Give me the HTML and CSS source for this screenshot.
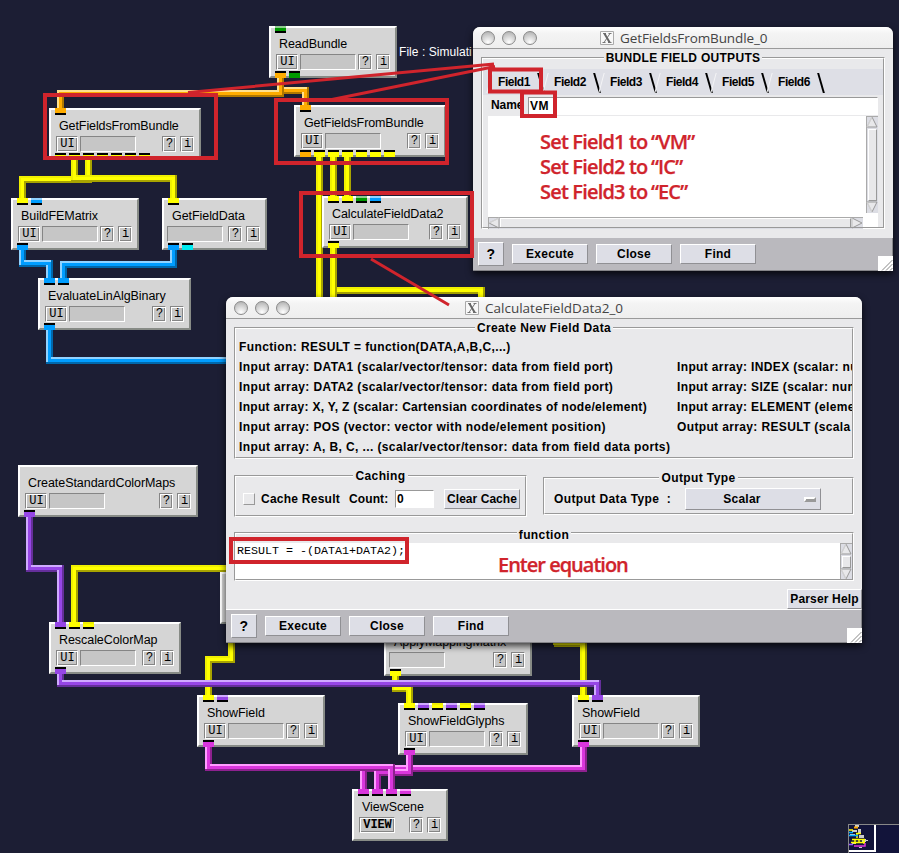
FILE: index.html
```
<!DOCTYPE html>
<html lang="en">
<head>
<meta charset="utf-8">
<title>Network editor</title>
<link rel="stylesheet" href="styles.css">
</head>
<body>
<main class="desktop">
<svg class="layer" width="899" height="853" viewBox="0 0 899 853">
<defs>
<path id="w1" d="M280.5 76V93.5H60.5V112"/><path id="w2" d="M280.5 76V90.5H305.5V109"/>
<path id="w3" d="M88.5 156V179.5H22.5V202"/><path id="w4" d="M74.5 156V178.5H173.5V202"/>
<path id="w5" d="M22.5 246V263.5H49.5V282"/><path id="w6" d="M173.5 246V264.5H63.5V282"/>
<path id="w7" d="M49.5 326V360.5H240"/><path id="w8" d="M319.5 155V300"/>
<path id="w9" d="M333.5 155V199"/><path id="w10" d="M347.5 155V199"/>
<path id="w11" d="M333.5 290.5H481.5V300"/><path id="w12" d="M333.5 244V300"/>
<path id="w13" d="M29.5 512V568.5H60.5V626"/><path id="w14" d="M240 568.5H74.5V626"/>
<path id="w15" d="M231.5 640V659.5H208.5V699"/><path id="w16" d="M395.5 672V688.5H409.5V707"/>
<path id="w17" d="M554 643.5H583.5V699"/><path id="w18" d="M60.5 670V683.5H597.5V699"/>
<path id="w19" d="M583.5 743V768.5H363.5V793"/><path id="w20" d="M409.5 751V772.5H377.5V793"/>
<path id="w21" d="M208.5 743V767.5H391.5V793"/>
</defs>
<g class="wire orange"><use class="dk" href="#w2"/><use class="lt" href="#w2" x="-1" y="-1"/><use class="md" href="#w2"/></g>
<g class="wire orange"><use class="dk" href="#w1"/><use class="lt" href="#w1" x="-1" y="-1"/><use class="md" href="#w1"/></g>
<g class="wire yellow"><use class="dk" href="#w3"/><use class="lt" href="#w3" x="-1" y="-1"/><use class="md" href="#w3"/></g>
<g class="wire yellow"><use class="dk" href="#w4"/><use class="lt" href="#w4" x="-1" y="-1"/><use class="md" href="#w4"/></g>
<g class="wire blue"><use class="dk" href="#w5"/><use class="lt" href="#w5" x="-1" y="-1"/><use class="md" href="#w5"/></g>
<g class="wire blue"><use class="dk" href="#w6"/><use class="lt" href="#w6" x="-1" y="-1"/><use class="md" href="#w6"/></g>
<g class="wire blue"><use class="dk" href="#w7"/><use class="lt" href="#w7" x="-1" y="-1"/><use class="md" href="#w7"/></g>
<g class="wire yellow"><use class="dk" href="#w8"/><use class="lt" href="#w8" x="-1" y="-1"/><use class="md" href="#w8"/></g>
<g class="wire yellow"><use class="dk" href="#w9"/><use class="lt" href="#w9" x="-1" y="-1"/><use class="md" href="#w9"/></g>
<g class="wire yellow"><use class="dk" href="#w10"/><use class="lt" href="#w10" x="-1" y="-1"/><use class="md" href="#w10"/></g>
<g class="wire yellow"><use class="dk" href="#w11"/><use class="lt" href="#w11" x="-1" y="-1"/><use class="md" href="#w11"/></g>
<g class="wire yellow"><use class="dk" href="#w12"/><use class="lt" href="#w12" x="-1" y="-1"/><use class="md" href="#w12"/></g>
<g class="wire purple"><use class="dk" href="#w13"/><use class="lt" href="#w13" x="-1" y="-1"/><use class="md" href="#w13"/></g>
<g class="wire yellow"><use class="dk" href="#w14"/><use class="lt" href="#w14" x="-1" y="-1"/><use class="md" href="#w14"/></g>
<g class="wire yellow"><use class="dk" href="#w15"/><use class="lt" href="#w15" x="-1" y="-1"/><use class="md" href="#w15"/></g>
<g class="wire yellow"><use class="dk" href="#w16"/><use class="lt" href="#w16" x="-1" y="-1"/><use class="md" href="#w16"/></g>
<g class="wire yellow"><use class="dk" href="#w17"/><use class="lt" href="#w17" x="-1" y="-1"/><use class="md" href="#w17"/></g>
<g class="wire purple"><use class="dk" href="#w18"/><use class="lt" href="#w18" x="-1" y="-1"/><use class="md" href="#w18"/></g>
<g class="wire magenta"><use class="dk" href="#w19"/><use class="lt" href="#w19" x="-1" y="-1"/><use class="md" href="#w19"/></g>
<g class="wire magenta"><use class="dk" href="#w20"/><use class="lt" href="#w20" x="-1" y="-1"/><use class="md" href="#w20"/></g>
<g class="wire magenta"><use class="dk" href="#w21"/><use class="lt" href="#w21" x="-1" y="-1"/><use class="md" href="#w21"/></g>
</svg>

<div class="node n-read"><div class="ports in"><i class="green open"></i></div><div class="name">ReadBundle</div><div class="tools"><b>UI</b><span></span><b class="q">?</b><b>i</b></div><div class="ports out"><i class="orange"></i><i class="green"></i></div></div>
<div class="node n-gfb1"><div class="ports in"><i class="orange"></i></div><div class="name">GetFieldsFromBundle</div><div class="tools"><b>UI</b><span></span><b class="q">?</b><b>i</b></div><div class="ports out"><i class="yellow"></i><i class="yellow"></i><i class="yellow"></i><i class="yellow"></i><i class="yellow"></i><i class="yellow"></i><i class="yellow"></i></div></div>
<div class="node n-gfb2"><div class="ports in"><i class="orange"></i></div><div class="name">GetFieldsFromBundle</div><div class="tools"><b>UI</b><span></span><b class="q">?</b><b>i</b></div><div class="ports out"><i class="orange"></i><i class="yellow"></i><i class="yellow"></i><i class="yellow"></i><i class="yellow"></i><i class="yellow"></i><i class="yellow"></i></div></div>
<div class="node n-fem"><div class="ports in"><i class="yellow"></i><i class="blue open"></i></div><div class="name">BuildFEMatrix</div><div class="tools"><b>UI</b><span></span><b class="q">?</b><b>i</b></div><div class="ports out"><i class="blue"></i></div></div>
<div class="node n-gfd"><div class="ports in"><i class="yellow"></i></div><div class="name">GetFieldData</div><div class="tools noui"><span></span><b class="q">?</b><b>i</b></div><div class="ports out"><i class="blue"></i><i class="cyan"></i></div></div>
<div class="node n-calc"><div class="ports in"><i class="yellow"></i><i class="yellow"></i><i class="green open"></i><i class="blue open"></i></div><div class="name">CalculateFieldData2</div><div class="tools"><b>UI</b><span></span><b class="q">?</b><b>i</b></div><div class="ports out"><i class="yellow"></i></div></div>
<div class="node n-eval"><div class="ports in"><i class="blue"></i><i class="blue"></i></div><div class="name">EvaluateLinAlgBinary</div><div class="tools"><b>UI</b><span></span><b class="q">?</b><b>i</b></div><div class="ports out"><i class="blue"></i></div></div>
<div class="node n-std"><div class="name">CreateStandardColorMaps</div><div class="tools"><b>UI</b><span></span><b class="q">?</b><b>i</b></div><div class="ports out"><i class="purple"></i></div></div>
<div class="node n-hid"></div>
<div class="node n-resc"><div class="ports in"><i class="purple"></i><i class="yellow"></i><i class="yellow open"></i></div><div class="name">RescaleColorMap</div><div class="tools"><b>UI</b><span></span><b class="q">?</b><b>i</b></div><div class="ports out"><i class="purple"></i></div></div>
<div class="node n-sf1"><div class="ports in"><i class="yellow"></i><i class="purple open"></i></div><div class="name">ShowField</div><div class="tools"><b>UI</b><span></span><b class="q">?</b><b>i</b></div><div class="ports out"><i class="magenta"></i></div></div>
<div class="node n-apply"><div class="name">ApplyMappingMatrix</div><div class="tools noui"><span></span><b class="q">?</b><b>i</b></div><div class="ports out"><i class="yellow"></i></div></div>
<div class="node n-glyph"><div class="ports in"><i class="yellow"></i><i class="purple open"></i><i class="yellow open"></i><i class="purple open"></i><i class="yellow open"></i><i class="purple open"></i></div><div class="name">ShowFieldGlyphs</div><div class="tools"><b>UI</b><span></span><b class="q">?</b><b>i</b></div><div class="ports out"><i class="magenta"></i></div></div>
<div class="node n-sf2"><div class="ports in"><i class="yellow"></i><i class="purple"></i></div><div class="name">ShowField</div><div class="tools"><b>UI</b><span></span><b class="q">?</b><b>i</b></div><div class="ports out"><i class="magenta"></i></div></div>
<div class="node n-view"><div class="ports in"><i class="magenta"></i><i class="magenta"></i><i class="magenta"></i><i class="magenta open"></i></div><div class="name">ViewScene</div><div class="tools"><b class="wide">VIEW</b><b class="q">?</b><b>i</b></div></div>
<div class="filetext">File : Simulati</div>

<section class="window bundle">
<header class="titlebar"><i class="light"></i><i class="light"></i><i class="light"></i><svg class="xicon" width="14" height="14" viewBox="0 0 14 14"><path class="frame" d="M.5 13.5V.5H13.5V13.5Z"/><path d="M3 2.5H6M8.5 2.5H11.5M2.5 11.5H5.5M8 11.5H11.5M10 2.5L4 11.5"/><path class="thick" d="M4.400 2.500L9.700 11.500"/></svg><h1>GetFieldsFromBundle_0</h1></header>
<div class="body">
<div class="group"><div class="legend">BUNDLE FIELD OUTPUTS</div>
<div class="tabs"><span>Field1</span><span>Field2</span><span>Field3</span><span>Field4</span><span>Field5</span><span>Field6</span></div>
<div class="namerow"><label>Name</label><div class="entry">VM</div></div>
<div class="textarea"><div class="area-main"><div class="note">Set Field1 to <em>“VM”</em><br>Set Field2 to <em>“IC”</em><br>Set Field3 to <em>“EC”</em></div>
<div class="vscroll"><svg width="12" height="12"><path class="g" d="M1 11L6 1L11 11Z"/><path class="w" d="M1 11L6 1"/></svg><i></i><svg width="12" height="12"><path class="g" d="M1 1H11L6 11Z"/><path class="w" d="M1 1L6 11"/></svg></div></div>
<div class="hscroll"><svg width="12" height="12"><path class="g" d="M11 1L1 6L11 11Z"/><path class="w" d="M11 1L1 6"/></svg><i></i><svg width="12" height="12"><path class="g" d="M1 1L11 6L1 11Z"/><path class="w" d="M1 11V1"/></svg></div></div>
</div></div>
<footer class="bar"><button class="help">?</button><button>Execute</button><button>Close</button><button>Find</button><svg class="grip" width="15" height="15"><path d="M4 14.500L14.500 4M8 14.500L14.500 8M12 14.500L14.500 12"/></svg></footer>
</section>

<section class="window calc">
<header class="titlebar"><i class="light"></i><i class="light"></i><i class="light"></i><svg class="xicon" width="14" height="14" viewBox="0 0 14 14"><path class="frame" d="M.5 13.5V.5H13.5V13.5Z"/><path d="M3 2.5H6M8.5 2.5H11.5M2.5 11.5H5.5M8 11.5H11.5M10 2.5L4 11.5"/><path class="thick" d="M4.400 2.500L9.700 11.500"/></svg><h1>CalculateFieldData2_0</h1></header>
<div class="body">
<div class="group create"><div class="legend">Create New Field Data</div>
<div class="cols"><div class="colA"><p>Function: RESULT = function(DATA,A,B,C,...)</p><p>Input array: DATA1 (scalar/vector/tensor: data from field port)</p><p>Input array: DATA2 (scalar/vector/tensor: data from field port)</p><p class="tight">Input array: X, Y, Z (scalar: Cartensian coordinates of node/element)</p><p>Input array: POS (vector: vector with node/element position)</p><p>Input array: A, B, C, ... (scalar/vector/tensor: data from field data ports)</p></div>
<div class="colB"><p>Input array: INDEX (scalar: nu</p><p>Input array: SIZE (scalar: num</p><p>Input array: ELEMENT (eleme</p><p>Output array: RESULT (scala</p></div></div></div>
<div class="mid">
<div class="group caching"><div class="legend">Caching</div><div class="line"><i class="check"></i><span class="cr">Cache Result</span><span class="ct">Count:</span><div class="entry count">0</div><button class="clear">Clear Cache</button></div></div>
<div class="group output"><div class="legend">Output Type</div><div class="line"><span class="odt">Output Data Type&nbsp; :</span><button class="drop"><span>Scalar</span><i></i></button></div></div>
</div>
<div class="group func"><div class="legend">function</div><div class="code"><div class="src">RESULT = -(DATA1+DATA2);</div><div class="note">Enter equation</div>
<div class="vscroll"><svg width="12" height="12"><path class="g" d="M1 11L6 1L11 11Z"/><path class="w" d="M1 11L6 1"/></svg><i></i><svg width="12" height="12"><path class="g" d="M1 1H11L6 11Z"/><path class="w" d="M1 1L6 11"/></svg></div></div></div>
<button class="parser">Parser Help</button>
</div>
<footer class="bar"><button class="help">?</button><button>Execute</button><button>Close</button><button>Find</button><svg class="grip" width="15" height="15"><path d="M4 14.500L14.500 4M8 14.500L14.500 8M12 14.500L14.500 12"/></svg></footer>
</section>

<svg class="layer marks" width="899" height="853" viewBox="0 0 899 853">
<path class="m4" d="M45 95H216V158H45ZM276 100H447V163H276ZM301 193H472V256H301ZM490 69.500H541V91.500H490ZM522 92.500H555V116H522ZM231 539H407V562H231Z"/>
<path class="m3" d="M188 92.500L494 64M332 99.500L495 66.500M371 259L449 305"/>
</svg>

<div class="minimap"><svg width="28" height="27"><g fill="#ccc"><path d="M6 0h4v2h-4zM3 5h5v2h-5zM9 4h3v4h-3zM1 9h5v2h-5zM10 10h5v3h-5zM13 14h4v3h-4zM3 18h4v1h-4zM15 15h4v1h-4zM10 22h3v1h-3z"/></g><path stroke="#fa0" stroke-width="2" d="M5 2.500H9"/><path stroke="#ff0" stroke-width="1.500" fill="none" d="M0 5H4M7 8.500H12M8 9V13M3 14.500H16M2 17.500H16M6 14V19M15 14V19M10 14V17"/><path stroke="#0af" stroke-width="1.500" d="M0 7.500H4M0 10.500H9"/><path stroke="#95f" stroke-width="1.500" d="M0 19.500H4"/><path stroke="#d3d" stroke-width="1.500" fill="none" d="M5 21H16V18"/></svg></div>
</main>
</body>
</html>
```
FILE: styles.css
```
* { box-sizing: border-box; }
body { margin: 0; background: #1c1e34; font-family: "Liberation Sans", Arial, sans-serif; color: #000; }
.desktop { position: relative; width: 899px; height: 853px; overflow: hidden; background: #1c1e34; }
.layer { position: absolute; left: 0; top: 0; display: block; }

/* wires */
.wire { fill: none; stroke-linejoin: miter; }
.wire .dk { stroke: var(--d); stroke-width: 7; }
.wire .lt { stroke: var(--l); stroke-width: 5; }
.wire .md { stroke: var(--c); stroke-width: 3; }
.orange { --c: #ffac00; --l: #ffe08c; --d: #b07800; }
.yellow { --c: #ffff00; --l: #f0f000; --d: #a8a400; }
.blue { --c: #009dff; --l: #90d2ff; --d: #0068ac; }
.purple { --c: #9646e6; --l: #cfaaff; --d: #652f9b; }
.magenta { --c: #d936dc; --l: #ff9cff; --d: #8e218f; }
.green { --c: #009a00; --l: #8fcb8f; --d: #006600; }
.cyan { --c: #00eaf0; --l: #90ffff; --d: #009aa0; }

/* modules */
.node { position: absolute; height: 52px; background: #d5d5d5; border: 2px solid; border-color: #fff #878b86 #878b86 #fff; width: 128px; }
.node .name { height: 26px; padding: 8px 0 0 8px; font-size: 12.5px; line-height: 16px; letter-spacing: -.06px; white-space: nowrap; }
.tools { display: flex; height: 16px; padding: 0 5px; }
.tools.noui { padding-left: 3px; }
.tools b { width: 14px; height: 16px; padding-left: 1px; background: #c6c6c6; border: 1px solid; border-color: #858585 #fff #fff #858585; box-shadow: inset 1px 1px #fff, inset -1px -1px #858585; font: 12px/15px "Liberation Mono", monospace; text-align: center; }
.tools b:first-child { width: 22px; margin-right: 2px; }
.tools b.wide:first-child { width: 36px; font-weight: bold; letter-spacing: -.1px; }
.tools span { width: 56px; background: #c6c6c6; border: 1px solid; border-color: #858585 #fff #fff #858585; }
.tools .q { margin-left: auto; margin-right: 4px; }
.n-gfb1 .name, .n-gfb2 .name { letter-spacing: -.1px; }
.ports { position: absolute; left: 4px; display: flex; gap: 3px; }
.ports i { width: 11px; height: 7px; background: var(--c); }
.ports.in { top: -2px; }
.ports.in i { border-bottom: 2px solid #000; }
.ports.in i.open { border-top: 2px solid var(--l); }
.ports.out { bottom: -2px; }
.ports.out i { border-top: 2px solid #000; }
.n-read { left: 269px; top: 26px; }
.n-gfb1 { left: 49px; top: 108px; width: 152px; }
.n-gfb2 { left: 294px; top: 105px; width: 152px; }
.n-fem { left: 11px; top: 198px; }
.n-gfd { left: 162px; top: 198px; width: 105px; }
.n-calc { left: 322px; top: 196px; width: 146px; }
.n-eval { left: 38px; top: 278px; width: 153px; }
.n-std { left: 18px; top: 465px; width: 180px; }
.n-hid { left: 220px; top: 572px; }
.n-resc { left: 49px; top: 622px; width: 132px; }
.n-sf1 { left: 197px; top: 695px; }
.n-apply { left: 384px; top: 624px; width: 148px; }
.n-glyph { left: 398px; top: 703px; width: 130px; }
.n-sf2 { left: 572px; top: 695px; }
.n-view { left: 352px; top: 789px; width: 96px; }
.filetext { position: absolute; left: 399px; top: 44px; color: #fff; font-size: 12px; line-height: 16px; letter-spacing: .05px; white-space: nowrap; }

/* windows */
.window { position: absolute; display: flex; flex-direction: column; background: #e9e9eb; border-radius: 7px 7px 0 0; box-shadow: 0 3px 7px rgba(0,0,0,.75); font-size: 12px; font-weight: bold; letter-spacing: .39px; overflow: hidden; }
.window.bundle { left: 473px; top: 27px; width: 420px; height: 244px; }
.window.calc { left: 226px; top: 297px; width: 636px; height: 346px; }
.titlebar { flex: none; display: flex; align-items: center; height: 22px; padding-left: 8px; background: linear-gradient(#fff, #f4f4f4 30%, #eee); border-bottom: 1px solid #9a9a9a; }
.light { width: 14px; height: 14px; margin-right: 7px; border-radius: 50%; border: 1px solid #8a8a8a; background: radial-gradient(circle at 50% 85%, #fff, #ccc 60%, #aaa); }
.xicon { fill: none; stroke: #777; stroke-width: 1; }
.xicon .frame { stroke: #aaa; fill: #f8f8f8; }
.xicon .thick { stroke-width: 2; stroke: #666; }
.bundle .xicon { margin-left: 56px; }
.calc .xicon { margin-left: 168px; }
.titlebar h1 { margin: 0 0 0 6px; font: 13.5px/20px "Open Sans", "Noto Sans", sans-serif; color: #444; letter-spacing: 0; }
.bundle h1 { letter-spacing: -.1px; }
.body { flex: 1; display: flex; flex-direction: column; padding: 8px 8px 0; }
.group { position: relative; border: 1px solid; border-color: #999 #fff #fff #999; }
.group::before { content: ""; position: absolute; inset: 0; border: 1px solid; border-color: #fff #999 #999 #fff; pointer-events: none; }
.legend { position: relative; width: max-content; height: 16px; margin: -8px auto 0; padding: 0 2px; line-height: 17px; background: #e9e9eb; }
.bundle .group { height: 172px; }
.bundle .legend { letter-spacing: .3px; }
.tabs { display: flex; margin: 3px 1px 0; padding-left: 3px; height: 26px; background: #dedfe6; }
.tabs span { display: flex; width: 56px; padding-left: 3px; line-height: 26px; letter-spacing: -.45px; }
.tabs span::before, .tabs span::after { content: ""; width: 1px; height: 20px; margin-top: 4px; }
.tabs span::before { margin-right: 8px; background: #f4f4f6; transform: skewX(-15deg); }
.tabs span::after { width: 1.5px; margin-left: auto; margin-right: 1px; background: #000; transform: skewX(16deg); }
.namerow { display: flex; margin: 2px 6px 0; height: 18px; }
.namerow label { width: 40px; padding-left: 3px; line-height: 16px; letter-spacing: -.1px; }
.entry { flex: 1; padding-left: 1px; line-height: 16px; background: #fff; border: 1px solid; border-color: #999 #fff #fff #999; }
.textarea { margin: 1px 6px 0; height: 113px; background: #fff; display: flex; flex-direction: column; }
.area-main { display: flex; height: 97px; }
.note { flex: 1; font: 600 20px/25.3px "Open Sans", sans-serif; letter-spacing: -1px; color: #d0242c; -webkit-text-stroke: .25px #d0242c; }
.note em { font-style: normal; margin-left: -1px; }
.bundle .note { padding: 13px 0 0 52px; line-height: 25px; letter-spacing: -.82px; white-space: nowrap; }
.vscroll { width: 12px; display: flex; flex-direction: column; background: #dcdde4; box-shadow: inset 1px 1px #aaa; }
.vscroll i { flex: 1; margin: 1px 1px 0 2px; background: #e8e8ea; border: 1px solid; border-color: #fff #999 #999 #fff; }
.hscroll { display: flex; width: 375px; height: 12px; margin-top: 4px; background: #dcdde4; box-shadow: inset 1px 1px #aaa; }
.hscroll i { flex: 1; margin: 1px 0; background: #e8e8ea; border: 1px solid; border-color: #fff #999 #999 #fff; }
.vscroll svg, .hscroll svg { flex: none; display: block; fill: #e8e8ea; }
.g { stroke: #999; }
.w { stroke: #fff; stroke-opacity: .6; fill: none; }
.bar { position: relative; flex: none; display: flex; align-items: center; gap: 8px; padding-left: 5px; background: #bab9be; border: solid #858589; border-width: 0 1px 1px 0; }
.bundle .bar { height: 33px; }
.calc .bar { height: 34px; border-top: 1px solid #fff; }
button { margin: 0; padding: 0; width: 76px; height: 20px; background: #dddee6; border: 1px solid; border-color: #fff #909094 #909094 #fff; font: bold 12px/16px "Liberation Sans", sans-serif; letter-spacing: .25px; color: #000; border-radius: 0; text-align: center; white-space: nowrap; }
.bar .help { width: 26px; height: 24px; font-size: 14px; }
.grip { position: absolute; right: -1px; bottom: -1px; background: #fff; stroke: #888; fill: none; }

.create { height: 132px; }
.cols { display: flex; margin: 1px 1px 0 4px; overflow: hidden; }
.cols p { margin: 0; height: 20px; line-height: 20px; white-space: nowrap; }
.cols p.tight { letter-spacing: .31px; }
.colA { flex: none; width: 438px; }
.colB { padding-top: 20px; width: 175px; overflow: hidden; letter-spacing: .36px; }
.mid { display: flex; align-items: flex-start; margin-top: 16px; }
.caching { width: 293px; height: 42px; }
.output { width: 311px; height: 38px; margin: 2px 0 0 16px; }
.line { display: flex; align-items: center; height: 22px; margin-top: 4px; line-height: 17px; }
.output .line { margin-top: 2px; }
.check { width: 12px; height: 12px; margin-left: 8px; border: 1px solid; border-color: #fff #999 #999 #fff; }
.cr { width: 88px; margin-left: 6px; letter-spacing: .25px; }
.ct { width: 46px; letter-spacing: .1px; }
.entry.count { flex: none; width: 39px; height: 18px; }
.clear { margin-left: 10px; letter-spacing: .05px; }
.odt { width: 131px; margin-left: 10px; }
.drop { display: flex; width: 136px; height: 22px; line-height: 20px; }
.drop span { width: 112px; }
.drop i { width: 12px; height: 5px; margin: 8px 0 0 6px; border: 2px solid; border-color: #fff #999 #999 #fff; background: #999; }
.func { height: 49px; margin-top: 15px; }
.func .legend { height: 17px; line-height: 20px; margin-bottom: -1px; }
.calc .body > .group, .calc .body > .mid { width: 620px; flex: none; }
.code { display: flex; height: 37px; margin: 2px 1px 0; background: #fff; }
.src { width: 262px; padding-left: 1px; font: 11.67px/16px "Liberation Mono", monospace; letter-spacing: 0; }
.calc .note { line-height: 44px; }
.parser { align-self: flex-end; margin: 8px -8px 0 0; flex: none; width: 75px; letter-spacing: .15px; }

.marks { fill: none; stroke: #d0242c; pointer-events: none; }
.m4 { stroke-width: 4; }
.m3 { stroke-width: 3; }
.minimap { position: absolute; left: 848px; top: 824px; width: 51px; height: 29px; border: solid #888; border-width: 1px 0 0 1px; background: #12143a; }
.minimap svg { display: block; width: 27px; height: 27px; border-right: 2px solid #fff; border-bottom: 2px solid #fff; }
```
